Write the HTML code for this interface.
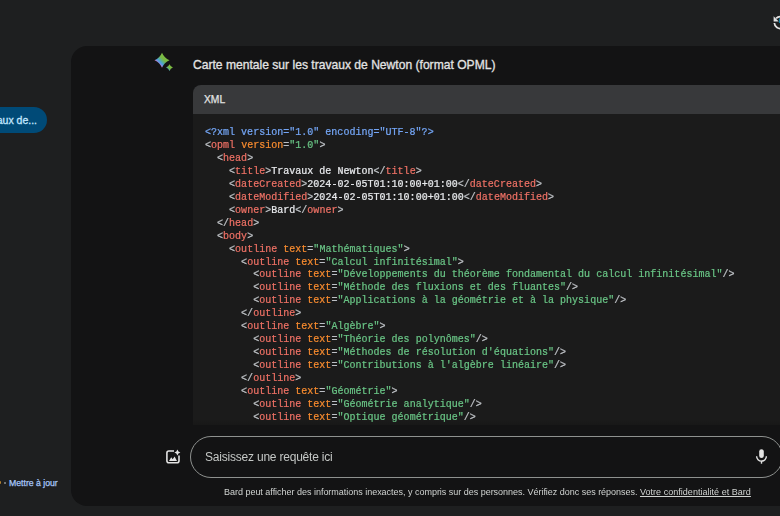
<!DOCTYPE html>
<html><head><meta charset="utf-8">
<style>
html,body{margin:0;padding:0;}
body{width:780px;height:516px;overflow:hidden;background:#1e1f20;position:relative;font-family:"Liberation Sans",sans-serif;}
.abs{position:absolute;}
#panel{left:71px;top:46px;width:740px;height:459.7px;background:#131314;border-radius:16px;}
#chip{left:-40px;top:107px;width:87px;height:26px;border-radius:13px;background:#004a77;}
#chiptxt{right:743px;top:113px;font-size:10.5px;color:#c2e7ff;white-space:nowrap;line-height:14px;-webkit-text-stroke:0.3px #c2e7ff;}
#maj{left:9px;top:476.8px;font-size:8.7px;color:#a8c7fa;white-space:nowrap;line-height:12px;-webkit-text-stroke:0.25px #a8c7fa;}
#dot{left:3.8px;top:481.6px;width:2.2px;height:2.2px;border-radius:50%;background:#8e918f;}
#odot{left:-1.6px;top:481.4px;width:2.4px;height:2.6px;border-radius:50%;background:#b8832f;}
#title{left:193px;top:57.5px;font-size:12.1px;color:#e3e3e3;white-space:nowrap;line-height:14px;-webkit-text-stroke:0.3px #e3e3e3;}
#codehdr{left:193px;top:85px;width:620px;height:29px;background:#38393b;border-radius:8px 0 0 0;}
#xml{left:204px;top:94.2px;font-size:10.3px;color:#e3e3e3;line-height:12px;-webkit-text-stroke:0.25px #e3e3e3;}
#codebody{left:193px;top:113.5px;width:620px;height:311.3px;background:#1b1b1b;overflow:hidden;}
#codebody:after{content:'';position:absolute;left:0;right:0;bottom:0;height:5px;background:linear-gradient(rgba(19,19,20,0),rgba(19,19,20,0.4));}
pre{margin:0;position:absolute;left:11.6px;top:13.5px;font-family:"Liberation Mono",monospace;font-size:10px;letter-spacing:0.016px;line-height:12.95px;color:#c0c4c8;-webkit-text-stroke-width:0.22px;will-change:transform;}
.b{color:#74a6f6}.t{color:#ee7165}.a{color:#f78b2f}.v{color:#69c485}.g{color:#bdc1c6}.x{color:#e8eaed}
#pill{left:190px;top:436px;width:591px;height:40px;border:1px solid #8e918f;border-radius:21px;}
#ph{left:205px;top:449.5px;font-size:12px;letter-spacing:-0.21px;color:#c4c7c5;white-space:nowrap;line-height:14px;}
#foot{left:224px;top:487.2px;font-size:9px;letter-spacing:-0.02px;color:#d0d3d1;white-space:nowrap;line-height:11px;}
#foot u{color:#d0d3d1;letter-spacing:0.03px}
</style></head><body>
<div id="panel" class="abs"></div>
<div id="chip" class="abs"></div>
<div id="chiptxt" class="abs">aux de...</div>
<div id="odot" class="abs"></div><div id="dot" class="abs"></div><div id="maj" class="abs">Mettre à jour</div>
<div id="title" class="abs">Carte mentale sur les travaux de Newton (format OPML)</div>
<svg class="abs" style="left:148px;top:46px" width="32" height="32" viewBox="148 46 32 32">
<defs><linearGradient id="sg" gradientUnits="userSpaceOnUse" x1="154.5" y1="67.5" x2="169.5" y2="52.5"><stop offset="0.24" stop-color="#e0709c"/><stop offset="0.30" stop-color="#8a8be0"/><stop offset="0.37" stop-color="#4aa3dc"/><stop offset="0.47" stop-color="#5fb08a"/><stop offset="0.56" stop-color="#78b944"/><stop offset="1" stop-color="#86c13f"/></linearGradient>
<linearGradient id="sg2" gradientUnits="userSpaceOnUse" x1="166" y1="71" x2="173" y2="64"><stop offset="0.2" stop-color="#4aa3dc"/><stop offset="0.45" stop-color="#78b944"/><stop offset="1" stop-color="#86c13f"/></linearGradient></defs>
<path d="M162,52.7 Q164.25,57.95 169.5,60.2 Q164.25,62.45 162,67.7 Q159.75,62.45 154.5,60.2 Q159.75,57.95 162,52.7Z" fill="url(#sg)"/>
<path d="M169.5,64.19999999999999 Q170.52,66.58 172.9,67.6 Q170.52,68.61999999999999 169.5,71.0 Q168.48,68.61999999999999 166.1,67.6 Q168.48,66.58 169.5,64.19999999999999Z" fill="url(#sg2)"/>
</svg>
<svg class="abs" style="left:756px;top:8px" width="24" height="24" viewBox="756 8 24 24">
<path d="M774.36,23 A5.95,5.95 0 1 0 776.1,18.35" fill="none" stroke="#e3e3e3" stroke-width="1.8"/>
<path d="M773.6,16.3 L773.6,21.4 L778.7,21.4 Z" fill="#e3e3e3"/>
<rect x="778.9" y="18.4" width="2" height="4.6" fill="#0f7fa6"/>
</svg>
<div id="codehdr" class="abs"></div>
<div id="xml" class="abs">XML</div>
<div id="codebody" class="abs"><pre><span class="b">&lt;?xml version="1.0" encoding="UTF-8"?&gt;</span>
&lt;<span class="t">opml</span> <span class="a">version</span><span class="g">=</span><span class="v">"1.0"</span>&gt;
  &lt;<span class="t">head</span>&gt;
    &lt;<span class="t">title</span>&gt;<span class="x">Travaux de Newton</span>&lt;/<span class="t">title</span>&gt;
    &lt;<span class="t">dateCreated</span>&gt;<span class="x">2024-02-05T01:10:00+01:00</span>&lt;/<span class="t">dateCreated</span>&gt;
    &lt;<span class="t">dateModified</span>&gt;<span class="x">2024-02-05T01:10:00+01:00</span>&lt;/<span class="t">dateModified</span>&gt;
    &lt;<span class="t">owner</span>&gt;<span class="x">Bard</span>&lt;/<span class="t">owner</span>&gt;
  &lt;/<span class="t">head</span>&gt;
  &lt;<span class="t">body</span>&gt;
    &lt;<span class="t">outline</span> <span class="a">text</span><span class="g">=</span><span class="v">"Mathématiques"</span>&gt;
      &lt;<span class="t">outline</span> <span class="a">text</span><span class="g">=</span><span class="v">"Calcul infinitésimal"</span>&gt;
        &lt;<span class="t">outline</span> <span class="a">text</span><span class="g">=</span><span class="v">"Développements du théorème fondamental du calcul infinitésimal"</span>/&gt;
        &lt;<span class="t">outline</span> <span class="a">text</span><span class="g">=</span><span class="v">"Méthode des fluxions et des fluantes"</span>/&gt;
        &lt;<span class="t">outline</span> <span class="a">text</span><span class="g">=</span><span class="v">"Applications à la géométrie et à la physique"</span>/&gt;
      &lt;/<span class="t">outline</span>&gt;
      &lt;<span class="t">outline</span> <span class="a">text</span><span class="g">=</span><span class="v">"Algèbre"</span>&gt;
        &lt;<span class="t">outline</span> <span class="a">text</span><span class="g">=</span><span class="v">"Théorie des polynômes"</span>/&gt;
        &lt;<span class="t">outline</span> <span class="a">text</span><span class="g">=</span><span class="v">"Méthodes de résolution d'équations"</span>/&gt;
        &lt;<span class="t">outline</span> <span class="a">text</span><span class="g">=</span><span class="v">"Contributions à l'algèbre linéaire"</span>/&gt;
      &lt;/<span class="t">outline</span>&gt;
      &lt;<span class="t">outline</span> <span class="a">text</span><span class="g">=</span><span class="v">"Géométrie"</span>&gt;
        &lt;<span class="t">outline</span> <span class="a">text</span><span class="g">=</span><span class="v">"Géométrie analytique"</span>/&gt;
        &lt;<span class="t">outline</span> <span class="a">text</span><span class="g">=</span><span class="v">"Optique géométrique"</span>/&gt;</pre></div>
<svg class="abs" style="left:158px;top:441px" width="32" height="32" viewBox="158 441 32 32">
<path d="M174,451 H168.9 A2,2 0 0 0 166.9,453 V460.8 A2,2 0 0 0 168.9,462.8 H177 A2,2 0 0 0 179,460.8 V455.6" fill="none" stroke="#e3e3e3" stroke-width="1.6"/>
<path d="M177.4,449.6 Q177.94,452.06 180.4,452.6 Q177.94,453.14000000000004 177.4,455.6 Q176.86,453.14000000000004 174.4,452.6 Q176.86,452.06 177.4,449.6Z" fill="#e3e3e3"/>
<path d="M169,460.9 L171.2,457.2 L172.7,459.2 L174.6,456.6 L177,460.9 Z" fill="#e3e3e3"/>
</svg>
<svg class="abs" style="left:748px;top:441px" width="32" height="32" viewBox="748 441 32 32">
<rect x="759.2" y="449.3" width="4.6" height="8.8" rx="2.3" fill="#e3e3e3"/>
<path d="M756.6,456.2 A4.9,4.9 0 0 0 766.4,456.2" fill="none" stroke="#e3e3e3" stroke-width="1.4"/>
<rect x="760.8" y="460.8" width="1.4" height="2.9" fill="#e3e3e3"/>
</svg>
<div id="pill" class="abs"></div>
<div id="ph" class="abs">Saisissez une requête ici</div>
<div id="foot" class="abs">Bard peut afficher des informations inexactes, y compris sur des personnes. Vérifiez donc ses réponses. <u>Votre confidentialité et Bard</u></div>
</body></html>
